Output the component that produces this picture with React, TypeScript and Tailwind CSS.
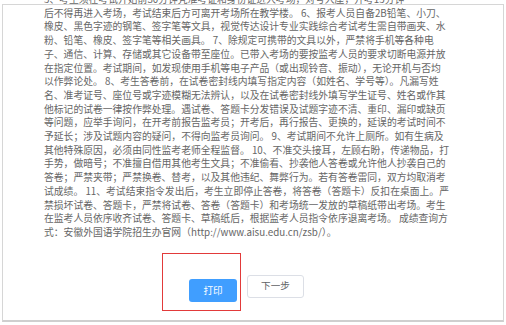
const lines = [
  "5、考生须在考试开始前30分钟凭准考证和身份证进入考场，对号入座，开考15分钟",
  "后不得再进入考场，考试结束后方可离开考场所在教学楼。 6、报考人员自备2B铅笔、小刀、",
  "橡皮、黑色字迹的钢笔、签字笔等文具，视觉传达设计专业实践综合考试考生需自带画夹、水",
  "粉、铅笔、橡皮、签字笔等相关画具。 7、除规定可携带的文具以外，严禁将手机等各种电",
  "子、通信、计算、存储或其它设备带至座位。已带入考场的要按监考人员的要求切断电源并放",
  "在指定位置。考试期间，如发现使用手机等电子产品（或出现铃音、振动），无论开机与否均",
  "以作弊论处。 8、考生答卷前，在试卷密封线内填写指定内容（如姓名、学号等）。凡漏写姓",
  "名、准考证号、座位号或字迹模糊无法辨认，以及在试卷密封线外填写学生证号、姓名或作其",
  "他标记的试卷一律按作弊处理。遇试卷、答题卡分发错误及试题字迹不清、重印、漏印或缺页",
  "等问题，应举手询问，在开考前报告监考员；开考后，再行报告、更换的，延误的考试时间不",
  "予延长；涉及试题内容的疑问，不得向监考员询问。 9、考试期间不允许上厕所。如有生病及",
  "其他特殊原因，必须由同性监考老师全程监督。 10、不准交头接耳，左顾右盼，传递物品，打",
  "手势，做暗号；不准擅自借用其他考生文具；不准偷看、抄袭他人答卷或允许他人抄袭自己的",
  "答卷；严禁夹带；严禁换卷、替考，以及其他违纪、舞弊行为。若有答卷雷同，双方均取消考",
  "试成绩。 11、考试结束指令发出后，考生立即停止答卷，将答卷（答题卡）反扣在桌面上。严",
  "禁损坏试卷、答题卡，严禁将试卷、答卷（答题卡）和考场统一发放的草稿纸带出考场。考生",
  "在监考人员依序收齐试卷、答题卡、草稿纸后，根据监考人员指令依序退离考场。 成绩查询方",
  "式：安徽外国语学院招生办官网（http://www.aisu.edu.cn/zsb/）。",
];

export default function App() {
  return (
    <div
      className="w-[506px] h-[325px] bg-white overflow-hidden"
      style={{ fontFamily: '"Noto Sans CJK SC", "Noto Sans", sans-serif' }}
    >
      <div className="ml-[2px] mt-[4px] w-[502px] h-[318px] border border-b-2 border-[#d6d6d6] border-b-[#cfcfcf] flex flex-col">
        {/* notice text, first line scrolled partly out of view */}
        <div className="-mt-[12px] pl-[41px] text-[9.8px] leading-[13.7px] text-[#666666]">
          {lines.map((line, i) => (
            <div key={i} className="whitespace-nowrap">
              {line}
            </div>
          ))}
        </div>

        {/* buttons */}
        <div className="mt-[35px] flex pl-[186px] gap-[10px]">
          <div className="relative">
            <button className="w-[48px] h-[23px] rounded-[3px] bg-[#409eff] text-white text-[9.6px] leading-none">
              打印
            </button>
            <div className="absolute -left-[27px] -right-[4px] -top-[22px] -bottom-[9px] border-[1.5px] border-[#e23a3a] pointer-events-none" />
          </div>
          <button className="w-[57px] h-[23px] rounded-[3px] bg-white border border-[#dcdfe6] text-[#606266] text-[9.6px] leading-none">
            下一步
          </button>
        </div>
      </div>
    </div>
  );
}
